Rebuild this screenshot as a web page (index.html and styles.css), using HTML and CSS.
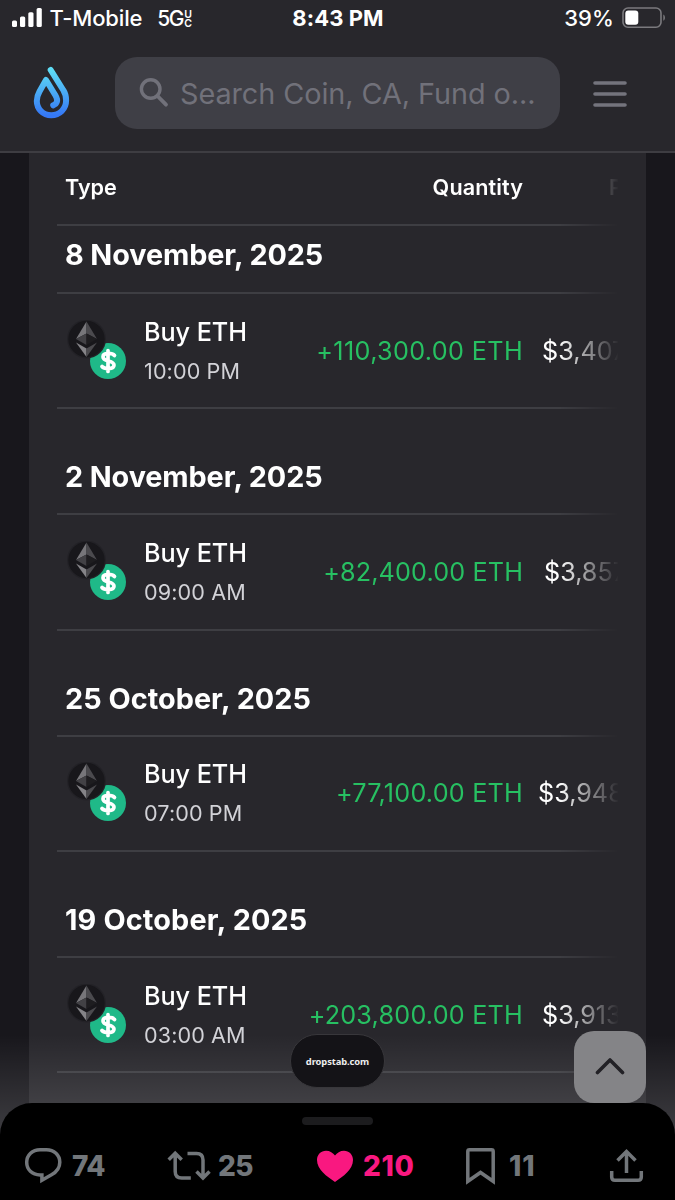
FILE: index.html
```html
<!DOCTYPE html>
<html lang="en">
<head>
<meta charset="utf-8">
<title>dropstab.com</title>
<link rel="stylesheet" href="styles.css">
</head>
<body>
<svg class="defs" width="0" height="0">
  <defs>
    <linearGradient id="drop" x1="0" y1="0" x2="0" y2="1">
      <stop offset="0" stop-color="#5edcf5"/><stop offset="1" stop-color="#3578f6"/>
    </linearGradient>
    <symbol id="pair" viewBox="0 0 60 60">
      <circle cx="41" cy="41" r="18" fill="#1fb988"/>
      <path d="M47.500 35.500C45.500 33 36 32 36 37C36 42 47 40 47 45C47 50 37 49 35 46.500M41 30.500V51.500" fill="none" stroke="#fff" stroke-width="3.700" stroke-linecap="round"/>
      <circle cx="19.500" cy="19" r="19.500" fill="#232227"/>
      <circle cx="19.500" cy="19" r="18.200" fill="#18171b"/>
      <path d="M19.500 1.500V13.500L9 19Z" fill="#77767a"/>
      <path d="M19.500 1.500V13.500L30 19Z" fill="#4b4a4e"/>
      <path d="M9 19L19.500 13.500V25Z" fill="#424145"/>
      <path d="M30 19L19.500 13.500V25Z" fill="#1e1d20"/>
      <path d="M9 22.500L19.500 28.500V37Z" fill="#858488"/>
      <path d="M30 22.500L19.500 28.500V37Z" fill="#4b4a4e"/>
    </symbol>
  </defs>
</svg>
<div class="screen">
  <div class="status">
    <div class="carrier">
      <svg class="signal" viewBox="0 0 30 19"><g fill="#fff"><rect x="0" y="12.500" width="5" height="6.500" rx="1.500"/><rect x="8" y="8.500" width="5.200" height="10.500" rx="1.500"/><rect x="16.300" y="4.200" width="5.200" height="14.800" rx="1.500"/><rect x="24.600" y="0" width="5.200" height="19" rx="1.500"/></g></svg>
      <span class="name">T-Mobile</span>
      <span class="net">5G</span>
      <span class="uc"><span>U</span><span>C</span></span>
    </div>
    <div class="clock">8:43 PM</div>
    <div class="power">
      <span class="percent">39%</span>
      <svg class="battery" viewBox="0 0 44 22"><rect x="1" y="1" width="38" height="19.200" rx="5" fill="none" stroke="#7b7a7e" stroke-width="1.600"/><rect x="3.300" y="3.500" width="13" height="14.200" rx="3" fill="#fff"/><path d="M41.300 7.500C43.500 8.500 43.500 12.800 41.300 13.800Z" fill="#7b7a7e"/></svg>
    </div>
  </div>
  <header class="bar">
    <svg class="logo" viewBox="32 66 40 56"><path d="M50.700 71L63.500 91.500C65.500 94.500 66.100 97.500 66.100 101.500C66.100 110 59.500 116.200 51.200 116.200C43 116.200 36.800 110 36.800 102C36.800 98 37.800 95.500 39.500 92.500L46 81L55.500 96.500C58.500 101.500 57 105 53.200 106.300" fill="none" stroke="url(#drop)" stroke-width="6" stroke-linecap="round" stroke-linejoin="round"/></svg>
    <div class="search">
      <svg class="glass" viewBox="0 0 30 30"><circle cx="11.700" cy="11" r="9.300" fill="none" stroke="#71717a" stroke-width="3.400"/><path d="M18.500 18L27 26.700" stroke="#71717a" stroke-width="3.800" stroke-linecap="round"/></svg>
      <span class="hint">Search Coin, CA, Fund o...</span>
    </div>
    <svg class="menu" viewBox="0 0 34 28"><path d="M2 3H32M2 14H32M2 25H32" stroke="#74747d" stroke-width="3.600" stroke-linecap="round"/></svg>
  </header>
  <main class="page">
    <section class="panel">
      <div class="table">
        <div class="head"><span class="col-type">Type</span><span class="col-qty">Quantity</span><span class="col-price">Price</span></div>

        <h2 class="date first">8 November, 2025</h2>
        <div class="row">
          <svg class="coins"><use href="#pair"/></svg>
          <div class="what"><b>Buy ETH</b><span>10:00 PM</span></div>
          <div class="qty q1">+110,300.00 ETH</div>
          <div class="price p1">$3,407</div>
        </div>

        <h2 class="date">2 November, 2025</h2>
        <div class="row">
          <svg class="coins"><use href="#pair"/></svg>
          <div class="what"><b>Buy ETH</b><span>09:00 AM</span></div>
          <div class="qty q2">+82,400.00 ETH</div>
          <div class="price p2">$3,857</div>
        </div>

        <h2 class="date d3">25 October, 2025</h2>
        <div class="row">
          <svg class="coins"><use href="#pair"/></svg>
          <div class="what"><b>Buy ETH</b><span>07:00 PM</span></div>
          <div class="qty q3">+77,100.00 ETH</div>
          <div class="price p3">$3,948</div>
        </div>

        <h2 class="date d4">19 October, 2025</h2>
        <div class="row">
          <svg class="coins"><use href="#pair"/></svg>
          <div class="what"><b>Buy ETH</b><span>03:00 AM</span></div>
          <div class="qty q4">+203,800.00 ETH</div>
          <div class="price p4">$3,913</div>
        </div>
      </div>
    </section>
  </main>
  <div class="glow"></div>
  <div class="domain">dropstab.com</div>
  <div class="top-button"><svg viewBox="0 0 30 18"><path d="M2.500 15.500L15 3L27.500 15.500" fill="none" stroke="#222126" stroke-width="3.600" stroke-linecap="round" stroke-linejoin="round"/></svg></div>
  <footer class="sheet">
    <div class="grip"></div>
    <div class="actions">
      <div class="action reply"><svg viewBox="24 1147 38 38"><path d="M40 1149.700H46.500C54 1149.700 59.800 1155.200 59.800 1162.200C59.800 1168 56.500 1172 51.500 1174.800L41.900 1180.300V1174.900H40C32 1174.900 26.700 1169.500 26.700 1162.300C26.700 1155.200 32.500 1149.700 40 1149.700Z"/></svg><span>74</span></div>
      <div class="action repost"><svg viewBox="167 1147 44 38"><path d="M168.700 1159.700L175.200 1153.300L181.700 1159.700M175.200 1154V1171.500Q175.200 1178 181.700 1178H190.800M187.500 1153.500H196.500Q203 1153.500 203 1160V1177M196.500 1171.500L203 1178L209.500 1171.500"/></svg><span>25</span></div>
      <div class="action like"><svg viewBox="316 1147 38 38"><path class="solid" d="M335 1182C327 1176.500 317 1169.500 317 1160C317 1154.500 321 1150.700 326 1150.700C330 1150.700 333 1152.800 335 1155.600C337 1152.800 340 1150.700 344 1150.700C349 1150.700 353 1154.500 353 1160C353 1169.500 343 1176.500 335 1182Z"/></svg><span>210</span></div>
      <div class="action save"><svg viewBox="464 1147 34 38"><path d="M467.800 1181.300V1151.500Q467.800 1149.800 469.500 1149.800H491.500Q493.200 1149.800 493.200 1151.500V1181.300L480.500 1172.500Z"/></svg><span>11</span></div>
      <div class="action share"><svg viewBox="608 1147 38 38"><path d="M626.500 1173V1152M617.500 1160.500L626.500 1151.500L635.500 1160.500M611.700 1171V1177Q611.700 1180.300 615 1180.300H638Q641.300 1180.300 641.300 1177V1171"/></svg></div>
    </div>
  </footer>
</div>
</body>
</html>
```
FILE: styles.css
```css
* { box-sizing: border-box; }
body { margin: 0; background: #28272c; font-family: Inter, "Liberation Sans", sans-serif; color: #fff; }
.defs { position: absolute; }
.screen { position: relative; width: 675px; height: 1200px; overflow: hidden; display: flex; flex-direction: column; background: #18171c; }

.status { height: 38px; flex: none; display: grid; grid-template-columns: 1fr auto 1fr; background: #28272c; padding: 0 11px 0 12px; font-size: 22px; line-height: 37px; font-weight: 500; white-space: nowrap; }
.carrier { display: flex; align-items: center; height: 37px; }
.signal { width: 30px; height: 19px; margin-top: -2px; }
.name { margin-left: 7.500px; letter-spacing: -.15px; }
.net { margin-left: 15px; font-size: 21px; letter-spacing: -1.600px; }
.uc { display: flex; flex-direction: column; margin-left: 1.500px; font-size: 10.500px; line-height: 9px; font-weight: 600; }
.clock { font-weight: 700; letter-spacing: .1px; }
.power { display: flex; justify-content: flex-end; align-items: center; height: 37px; }
.percent { letter-spacing: .1px; }
.battery { width: 44px; height: 22px; margin: -2px -2px 0 8px; }

.bar { height: 115px; flex: none; display: flex; align-items: center; background: #28272c; border-bottom: 2px solid #3e3d42; padding: 0 47px 2px 32px; }
.logo { width: 40px; height: 56px; margin-top: -1px; }
.search { display: flex; align-items: center; width: 445px; height: 72px; margin: -1px 0 0 43px; border-radius: 22px; background: #3f3f46; padding-left: 24px; }
.glass { width: 30px; height: 30px; }
.hint { margin: 1px 0 0 11px; font-size: 28.800px; letter-spacing: -.06px; color: #71717a; white-space: nowrap; }
.menu { width: 34px; height: 28px; margin-left: 33px; }

.page { flex: 1; padding: 0 29px; min-height: 0; }
.panel { height: 100%; padding: 0 29px 0 28px; background: #28272c; }
.table { width: 561px; overflow: hidden; -webkit-mask-image: linear-gradient(90deg, #000 502px, transparent 562px); mask-image: linear-gradient(90deg, #000 502px, transparent 562px); }
.head, .row, .date { border-bottom: 2px solid #3e3e43; padding-left: 8px; }
.head { display: flex; height: 73px; line-height: 69px; font-size: 21.600px; font-weight: 580; }
.head span { flex: none; }
.col-type { width: 200px; }
.col-qty { width: 258px; text-align: right; letter-spacing: .1px; }
.col-price { margin-left: 86px; }
.date { margin: 0; height: 106.200px; padding-top: 39px; line-height: 58px; font-size: 28.800px; font-weight: 680; letter-spacing: -.1px; white-space: nowrap; }
.date.first { height: 68px; padding-top: 0; }
.d3 { letter-spacing: .04px; }
.d4 { letter-spacing: .16px; }
.row { display: flex; align-items: center; height: 115.200px; white-space: nowrap; }
.coins { width: 60px; height: 60px; margin: -2px 17px 0 2px; flex: none; }
.what { display: flex; flex-direction: column; width: 140px; margin-top: 2px; flex: none; }
.what b { font-size: 25.200px; line-height: 39px; font-weight: 540; letter-spacing: -.05px; }
.what span { font-size: 21.600px; line-height: 39px; letter-spacing: .1px; color: #d2d2d7; }
.qty { flex: none; width: 239px; text-align: right; font-size: 25.200px; color: #27c062; }
.q1 { letter-spacing: .36px; }
.q2 { letter-spacing: .14px; }
.q3, .q4 { letter-spacing: .22px; }
.price { flex: none; font-size: 25.200px; font-weight: 430; }
.p1 { margin-left: 19px; }
.p2 { margin-left: 21px; }
.p3 { margin-left: 15px; }
.p4 { margin-left: 19px; }

.glow { position: absolute; left: 0; right: 0; top: 1035px; height: 110px; background: linear-gradient(rgba(255,255,255,0), rgba(255,255,255,.18)); }
.domain { position: absolute; left: 290px; top: 1034px; width: 95px; height: 54px; border: 1px solid #38373b; border-radius: 27px; background: #141317; color: #eee; font: 700 9.400px/53px "Noto Sans", sans-serif; letter-spacing: -.1px; text-align: center; }
.top-button { position: absolute; left: 574px; top: 1031px; width: 72px; height: 72px; border-radius: 20px; background: #848487; display: flex; align-items: center; justify-content: center; }
.top-button svg { width: 30px; height: 18px; margin-top: -2px; }
.sheet { position: absolute; left: 0; right: 0; bottom: 0; height: 97px; background: #000; border-radius: 32px 32px 0 0; padding-top: 14px; }
.grip { width: 71px; height: 8px; margin: 0 auto; border-radius: 4px; background: #1c1c1e; }
.actions { display: flex; margin-top: 22px; padding-left: 24px; }
.action { display: flex; align-items: center; height: 38px; color: #72767a; font-size: 28px; font-weight: 800; letter-spacing: -.5px; }
.action svg { height: 38px; flex: none; fill: none; stroke: #72767a; stroke-width: 3.500; }
.action .solid { fill: #f91880; stroke: none; }
.reply { width: 143px; }
.reply svg { width: 38px; }
.reply span { margin-left: 10px; }
.repost { width: 149px; }
.repost svg { width: 44px; }
.repost span { margin-left: 7px; }
.like { width: 148px; color: #f91880; letter-spacing: .6px; }
.like svg { width: 38px; }
.like span { margin-left: 9px; }
.save { width: 144px; letter-spacing: 1px; }
.save svg { width: 34px; }
.save span { margin-left: 11px; }
.share svg { width: 38px; }
```
